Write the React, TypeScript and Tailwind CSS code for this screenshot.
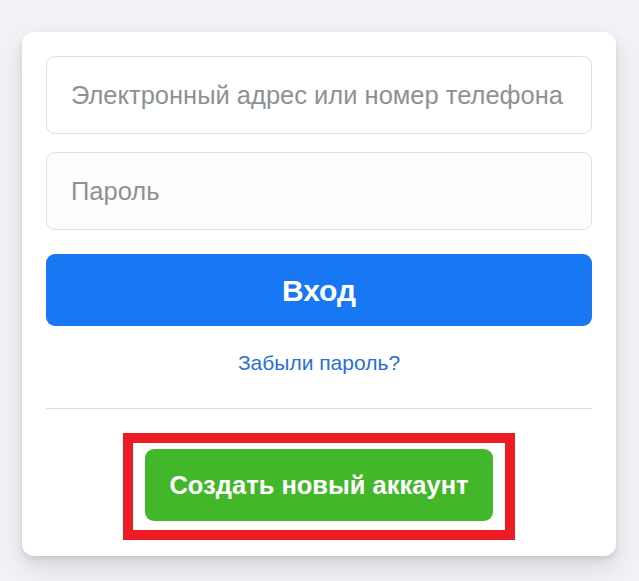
import { useState } from 'react';

const font = { fontFamily: '"Liberation Sans", Arial, sans-serif' };

export default function App() {
  const [email, setEmail] = useState('');
  const [password, setPassword] = useState('');

  return (
    <div
      className="min-h-[581px] w-full bg-[#f0f2f5] flex pl-[22px] pt-[32px]"
      style={font}
    >
      {/* Login card */}
      <div className="w-[594px] h-[524px] bg-white rounded-[12px] shadow-[0_3px_6px_rgba(0,0,0,0.1),0_12px_24px_rgba(0,0,0,0.1)] px-[24px] pt-[24px] pb-[16px] flex flex-col">
        <input
          type="text"
          value={email}
          onChange={(e) => setEmail(e.target.value)}
          placeholder="Электронный адрес или номер телефона"
          className="h-[78px] w-full rounded-[9px] border border-[#dddfe2] bg-white px-[24px] text-[25.5px] text-[#1d2129] placeholder:text-[#8d9196] outline-none"
        />
        <input
          type="password"
          value={password}
          onChange={(e) => setPassword(e.target.value)}
          placeholder="Пароль"
          className="mt-[18px] h-[78px] w-full rounded-[9px] border border-[#dddfe2] bg-[#fdfdfe] px-[24px] text-[25.5px] text-[#1d2129] placeholder:text-[#8d9196] outline-none"
        />

        <button
          type="button"
          className="mt-[24px] h-[72px] w-full rounded-[9px] bg-[#1877f2] text-white text-[30px] font-bold"
        >
          Вход
        </button>

        <a
          href="#"
          className="mt-[24px] block text-center text-[21px] leading-[26px] text-[#2a6fd6]"
        >
          Забыли пароль?
        </a>

        {/* Divider */}
        <div className="mt-[32px] h-px w-full bg-[#dadde1]" />

        {/* Highlighted create-account button */}
        <div className="mt-[24px] flex justify-center">
          <div className="border-[10px] border-[#ed1c24] px-[12px] pt-[6px] pb-[9px]">
            <button
              type="button"
              className="h-[72px] rounded-[9px] bg-[#42b72a] px-[24px] text-white text-[25.5px] font-bold"
            >
              Создать новый аккаунт
            </button>
          </div>
        </div>
      </div>
    </div>
  );
}
